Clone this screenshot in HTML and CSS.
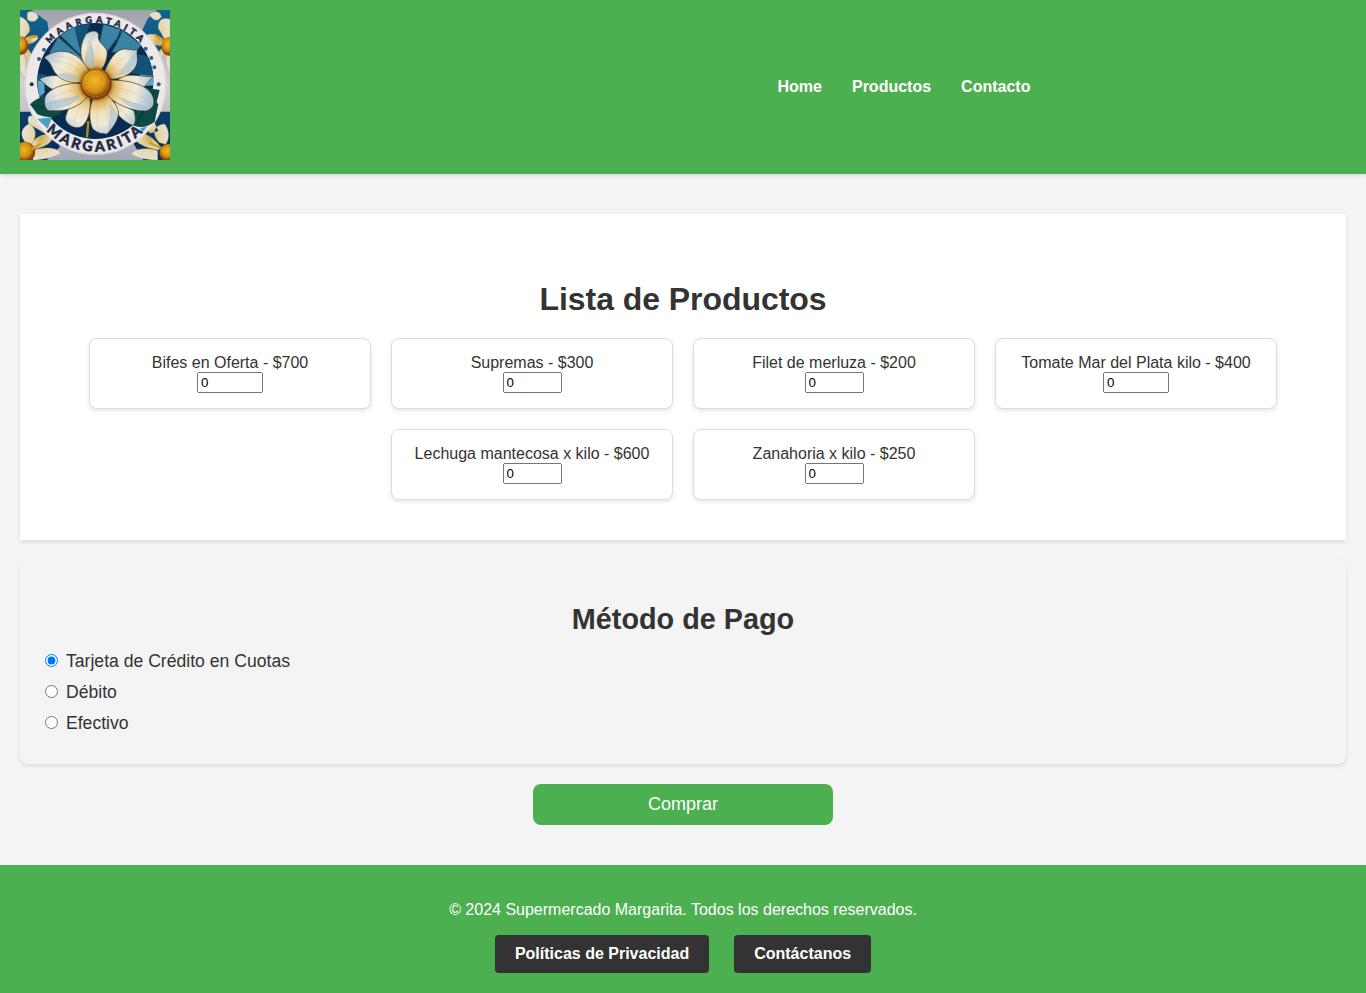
FILE: index.html
```html
<!DOCTYPE html>
<html lang="es">
<head>
<meta charset="utf-8">
<title>Supermercado Margarita</title>
<link rel="stylesheet" href="styles.css">
</head>
<body>
<header class="header">
  <svg class="logo" viewBox="30 30 450 450" role="img" aria-label="Margarita">
    <defs>
      <linearGradient id="sky" x1="0" y1="0" x2="0" y2="1"><stop offset="0" stop-color="#9fa2aa"/><stop offset=".5" stop-color="#d5d0d1"/><stop offset="1" stop-color="#a3a8b5"/></linearGradient>
      <linearGradient id="blue" x1="0" y1="0" x2="0" y2="1"><stop offset="0" stop-color="#10648f"/><stop offset="1" stop-color="#072c55"/></linearGradient>
      <radialGradient id="petal" gradientUnits="userSpaceOnUse" cx="258" cy="252" r="170"><stop offset=".24" stop-color="#9a5a1d"/><stop offset=".34" stop-color="#dfb968"/><stop offset=".5" stop-color="#f0dfb6"/><stop offset=".72" stop-color="#eeeadb"/><stop offset="1" stop-color="#a9c3d6"/></radialGradient>
      <radialGradient id="cream"><stop offset="0" stop-color="#cdab4b"/><stop offset=".5" stop-color="#e5d7a8"/><stop offset="1" stop-color="#e6e0cf"/></radialGradient>
      <radialGradient id="core" cx=".45" cy=".4"><stop offset="0" stop-color="#f2b823"/><stop offset=".65" stop-color="#d38d14"/><stop offset="1" stop-color="#8a450d"/></radialGradient>
      <clipPath id="disc"><circle cx="256" cy="243" r="174"/></clipPath>
      <path id="arcTop" d="M119 131.500A182 182 0 0 1 394 131.500"/>
      <path id="arcBottom" d="M108.700 391.200A203 203 0 0 0 403 391.500"/>
    </defs>
    <rect x="30" y="30" width="450" height="450" fill="url(#sky)"/>
    <path fill="url(#blue)" d="M30 30H65L112 65L118 105L80 170L60 190L30 120ZM480 30H440L412 58L397 90L430 130L445 180L480 120ZM30 335H90L150 440L110 480H30ZM480 335H430L370 430L400 480H480Z"/>
    <g fill="url(#cream)" stroke="#a99d72" stroke-width="1">
      <path d="M30 50C48 55 63 75 58 96L34 122L30 120ZM40 120C60 100 91 105 82 118C72 132 50 134 38 133ZM30 150C43 153 55 185 44 235L30 210ZM52 38C67 28 87 40 84 54C76 68 60 67 52 58ZM40 142C60 143 70 170 67 192C53 181 43 163 40 142Z"/>
      <path d="M480 58C459 51 443 60 445 85L463 116L480 121ZM418 43C435 30 451 34 454 50C445 66 428 63 418 43ZM465 122C443 102 415 98 407 108C414 132 438 139 462 136ZM465 142C438 150 434 180 442 188C455 179 463 160 465 142ZM471 151C466 173 468 206 480 220V155Z"/>
      <path d="M45 425C28 404 34 381 59 371C80 386 81 411 65 432ZM61 438C74 407 113 394 128 412C124 435 90 445 63 449ZM65 452C96 439 144 441 152 459C133 473 94 480 69 480ZM56 371C49 343 62 342 84 358C106 370 122 384 108 402Z"/>
      <path d="M449 428C421 402 433 374 464 372C481 394 477 420 467 433ZM451 440C424 402 381 386 373 417C389 438 424 447 447 450ZM443 452C407 440 370 448 364 461C380 475 417 480 443 480ZM430 360C414 340 400 340 390 360L420 400L445 393Z"/>
    </g>
    <g fill="url(#core)"><ellipse cx="32" cy="137" rx="23" ry="28"/><ellipse cx="476" cy="139" rx="22" ry="28"/><circle cx="45" cy="456" r="31"/><circle cx="474" cy="458" r="26"/></g>
    <path d="M58 112L80 109M435 105L455 120M68 446L90 433M420 429L450 443" stroke="#d69820" stroke-width="7" stroke-linecap="round"/>
    <circle cx="256.500" cy="251.500" r="213" fill="#eee8e8"/>
    <circle cx="256.500" cy="251.500" r="211" fill="none" stroke="#ccc5c7" stroke-width="2"/>
    <g clip-path="url(#disc)">
      <rect x="70" y="65" width="375" height="360" fill="#072b52"/>
      <path fill="#3a83a5" stroke="#164a67" stroke-width="3" d="M118 157L145 110L217 172L211 195L128 165ZM150 105L194 78L216 170ZM280 72L340 90L286 163L265 140ZM338 91L395 135L382 150L305 158Z"/>
      <path fill="#10527a" d="M194 76L240 72L213 152ZM360 160L430 170L435 230L365 220ZM80 220L110 225L100 300L80 290Z"/>
      <path fill="#5da7c4" d="M83 242L102 243L104 278L87 290ZM390 223L433 229L430 256L386 260Z"/>
      <path d="M334 85L316 137M146 110L216 171" stroke="#123c52" stroke-width="4"/>
    </g>
    <path d="M235 363L231 412" stroke="#b18b1b" stroke-width="7"/>
    <path fill="#0c4a43" d="M60 313C78 294 105 285 126 291L164 326C151 352 114 357 82 343ZM399 262L449 270L440 307L445 313L434 365C411 383 382 386 365 373Z"/>
    <path d="M66 315L158 332M435 275L394 344L381 370" stroke="#042f38" stroke-width="3"/>
    <path fill="#4b9ec1" d="M82 357L126 352L113 386ZM390 385L413 379L397 397Z"/>
    <g fill="url(#petal)" stroke="#40351f" stroke-width="2" stroke-linejoin="round">
      <path d="M88 238C112 222 159 224 180 238L214 254L160 274C120 274 110 255 88 238Z"/>
      <path d="M334 231C361 218 402 232 430 230C414 243 412 260 385 269L302 261Z"/>
      <path d="M318 305L372 332C378 353 378 374 367 376C335 362 322 344 307 316Z"/>
      <path d="M214 284C188 301 160 344 168 363C180 384 208 389 220 376C241 351 243 317 240 290Z"/>
      <path d="M240 211C201 180 210 132 228 102C243 91 262 89 266 104C261 129 285 135 291 153C295 174 280 208 270 211Z"/>
      <path d="M282 219C297 179 319 146 346 147C360 147 373 153 382 148C378 169 388 183 375 203C357 230 319 240 299 237Z"/>
      <path d="M213 248C178 249 151 240 141 224C125 213 126 185 102 174C122 153 164 147 190 163C217 174 225 197 237 210Z"/>
      <path d="M216 252C173 244 113 266 105 291C101 313 105 336 127 332C178 337 222 310 234 286Z"/>
      <path d="M301 240C345 240 404 249 425 282C438 306 432 325 409 333C362 334 319 313 288 285Z"/>
      <path d="M253 287C237 319 235 353 247 385C261 402 284 402 291 402C309 382 324 363 326 336C319 315 311 302 290 284Z"/>
    </g>
    <g fill="#9dbdd3" opacity=".55">
      <path d="M107 310C130 295 175 295 215 285C190 315 150 330 112 329Z"/>
      <path d="M145 222C165 215 190 220 212 240C180 246 155 239 145 222Z"/>
      <path d="M222 190C222 165 240 140 238 120C250 145 262 175 250 206Z"/>
      <path d="M320 225C345 205 352 175 378 155C376 180 382 190 372 204C357 222 340 226 320 225Z"/>
      <path d="M325 290C360 305 395 315 420 322C385 336 350 322 325 290Z"/>
      <path d="M292 400C300 370 300 340 298 310C315 325 320 335 324 343C320 370 305 385 292 400Z"/>
    </g>
    <path d="M235 203Q220 165 237 121M252 203Q239 149 247 111M262 204Q263 165 264 132M223 205Q190 168 134 168M213 218Q184 184 131 182M214 234Q169 217 143 205M223 270Q168 268 126 293M216 281Q178 303 121 311M292 218Q314 190 355 165M299 228Q340 207 367 193M302 262Q367 266 415 304M298 276Q347 307 392 315M265 303Q257 350 264 385M279 300Q300 346 296 384M221 298Q198 334 190 365M312 305L365 362" fill="none" stroke="#b69564" stroke-width="1.400" opacity=".45"/>
    <circle cx="258" cy="252" r="47" fill="url(#core)"/>
    <g fill="none" stroke="#ffd74a" stroke-width="3" stroke-dasharray="3 4" opacity=".6"><circle cx="256" cy="251" r="6"/><circle cx="256" cy="251" r="14"/><circle cx="257" cy="251" r="22"/><circle cx="257" cy="251" r="30"/><circle cx="258" cy="252" r="38"/></g>
    <circle cx="258" cy="252" r="44" fill="none" stroke="#693508" stroke-width="4" stroke-dasharray="3 4" opacity=".6"/>
    <g fill="#246783"><circle cx="102" cy="149" r="6"/><circle cx="87" cy="177" r="6"/><circle cx="65" cy="253" r="6" fill="#25364f"/><circle cx="407" cy="146" r="6"/><circle cx="424" cy="174" r="6"/><circle cx="433" cy="202" r="6"/><circle cx="446" cy="253" r="6"/></g>
    <text class="logo-text logo-text-top"><textPath href="#arcTop" textLength="306" lengthAdjust="spacing">MAARGATAITA</textPath></text>
    <text class="logo-text logo-text-bottom"><textPath href="#arcBottom" textLength="322" lengthAdjust="spacing">MARGARITA</textPath></text>
  </svg>
  <nav class="nav">
    <a href="#">Home</a>
    <a href="#">Productos</a>
    <a href="#">Contacto</a>
  </nav>
</header>
<main class="main">
  <section class="products">
    <h1>Lista de Productos</h1>
    <div class="product-list">
      <div class="product"><label for="p1">Bifes en Oferta - $700</label><input class="qty qty-wide" id="p1" type="number" value="0"></div>
      <div class="product"><label for="p2">Supremas - $300</label><input class="qty" id="p2" type="number" value="0"></div>
      <div class="product"><label for="p3">Filet de merluza - $200</label><input class="qty" id="p3" type="number" value="0"></div>
      <div class="product"><label for="p4">Tomate Mar del Plata kilo - $400</label><input class="qty qty-wide" id="p4" type="number" value="0"></div>
      <div class="product"><label for="p5">Lechuga mantecosa x kilo - $600</label><input class="qty" id="p5" type="number" value="0"></div>
      <div class="product"><label for="p6">Zanahoria x kilo - $250</label><input class="qty" id="p6" type="number" value="0"></div>
    </div>
  </section>
  <section class="payment">
    <h2>Método de Pago</h2>
    <label class="option"><input type="radio" name="pago" checked><span>Tarjeta de Crédito en Cuotas</span></label>
    <label class="option"><input type="radio" name="pago"><span>Débito</span></label>
    <label class="option"><input type="radio" name="pago"><span>Efectivo</span></label>
  </section>
  <button class="buy" type="button">Comprar</button>
</main>
<footer class="footer">
  <p>© 2024 Supermercado Margarita. Todos los derechos reservados.</p>
  <div class="footer-links">
    <a href="#">Políticas de Privacidad</a>
    <a href="#">Contáctanos</a>
  </div>
</footer>
</body>
</html>
```

FILE: styles.css
```css
* { box-sizing: border-box; }
body {
  margin: 0;
  font-family: "Liberation Sans", Arial, sans-serif;
  font-size: 16px;
  color: #333;
  background: #f4f4f4;
}
.header {
  display: flex;
  align-items: flex-start;
  height: 174px;
  padding: 10px 20px;
  background: #4caf50;
  box-shadow: 0 2px 4px rgba(0, 0, 0, .1);
}
.logo { width: 150px; height: 150px; flex: none; }
.logo-text {
  font-family: Lato, "Liberation Sans", sans-serif;
  font-weight: 900;
  fill: #1d2b46;
  stroke: #1d2b46;
  stroke-width: 1.5px;
}
.logo-text-top { font-size: 27px; }
.logo-text-bottom { font-size: 43px; }
.nav {
  display: flex;
  align-self: center;
  gap: 30px;
  margin-left: auto;
  margin-right: 315.6px;
}
.nav a { color: #fff; font-weight: bold; text-decoration: none; line-height: 18px; }
.main { padding: 40px 20px; }
.products {
  padding: 67px 40px 40px;
  background: #fff;
  box-shadow: 0 2px 4px rgba(0, 0, 0, .1);
}
.products h1 { margin: 0 0 20px; font-size: 32px; line-height: 37px; letter-spacing: -.06px; text-align: center; }
.product-list { display: flex; flex-wrap: wrap; justify-content: center; gap: 20px; }
.product {
  display: flex;
  flex-direction: column;
  align-items: center;
  width: 282px;
  height: 71px;
  padding: 15px;
  border: 1px solid #ddd;
  border-radius: 8px;
  background: #fff;
  box-shadow: 0 2px 4px rgba(0, 0, 0, .1);
}
.product label { line-height: 18px; white-space: nowrap; }
.qty { width: 59px; height: 21px; margin: 0; font: 13.333px "Liberation Sans", Arial, sans-serif; }
.qty-wide { width: 66px; }
.payment {
  height: 204px;
  margin-top: 20px;
  padding: 43px 20px 0;
  border-radius: 8px;
  box-shadow: 0 2px 4px rgba(0, 0, 0, .1);
}
.payment h2 { margin: 0 0 14px; font-size: 28.8px; line-height: 33px; text-align: center; }
.option { display: flex; align-items: center; height: 21px; margin-bottom: 10px; font-size: 17.6px; line-height: 21px; }
.option input { width: 13px; height: 13px; margin: 0 8px 0 5px; }
.option span { padding-top: 2px; }
.buy {
  display: block;
  width: 300px;
  height: 41px;
  margin: 20px auto 0;
  padding: 10px;
  border: 0;
  border-radius: 8px;
  background: #4caf50;
  color: #fff;
  font: 18px "Liberation Sans", Arial, sans-serif;
}
.footer { height: 128px; padding: 36px 20px 20px; background: #4caf50; color: #fff; text-align: center; }
.footer p { margin: 0 0 16px; line-height: 18px; }
.footer-links { display: flex; justify-content: center; gap: 25px; }
.footer-links a {
  padding: 10px 20px;
  border-radius: 4px;
  background: #333;
  color: #fff;
  font-weight: bold;
  line-height: 18px;
  text-decoration: none;
}
```
